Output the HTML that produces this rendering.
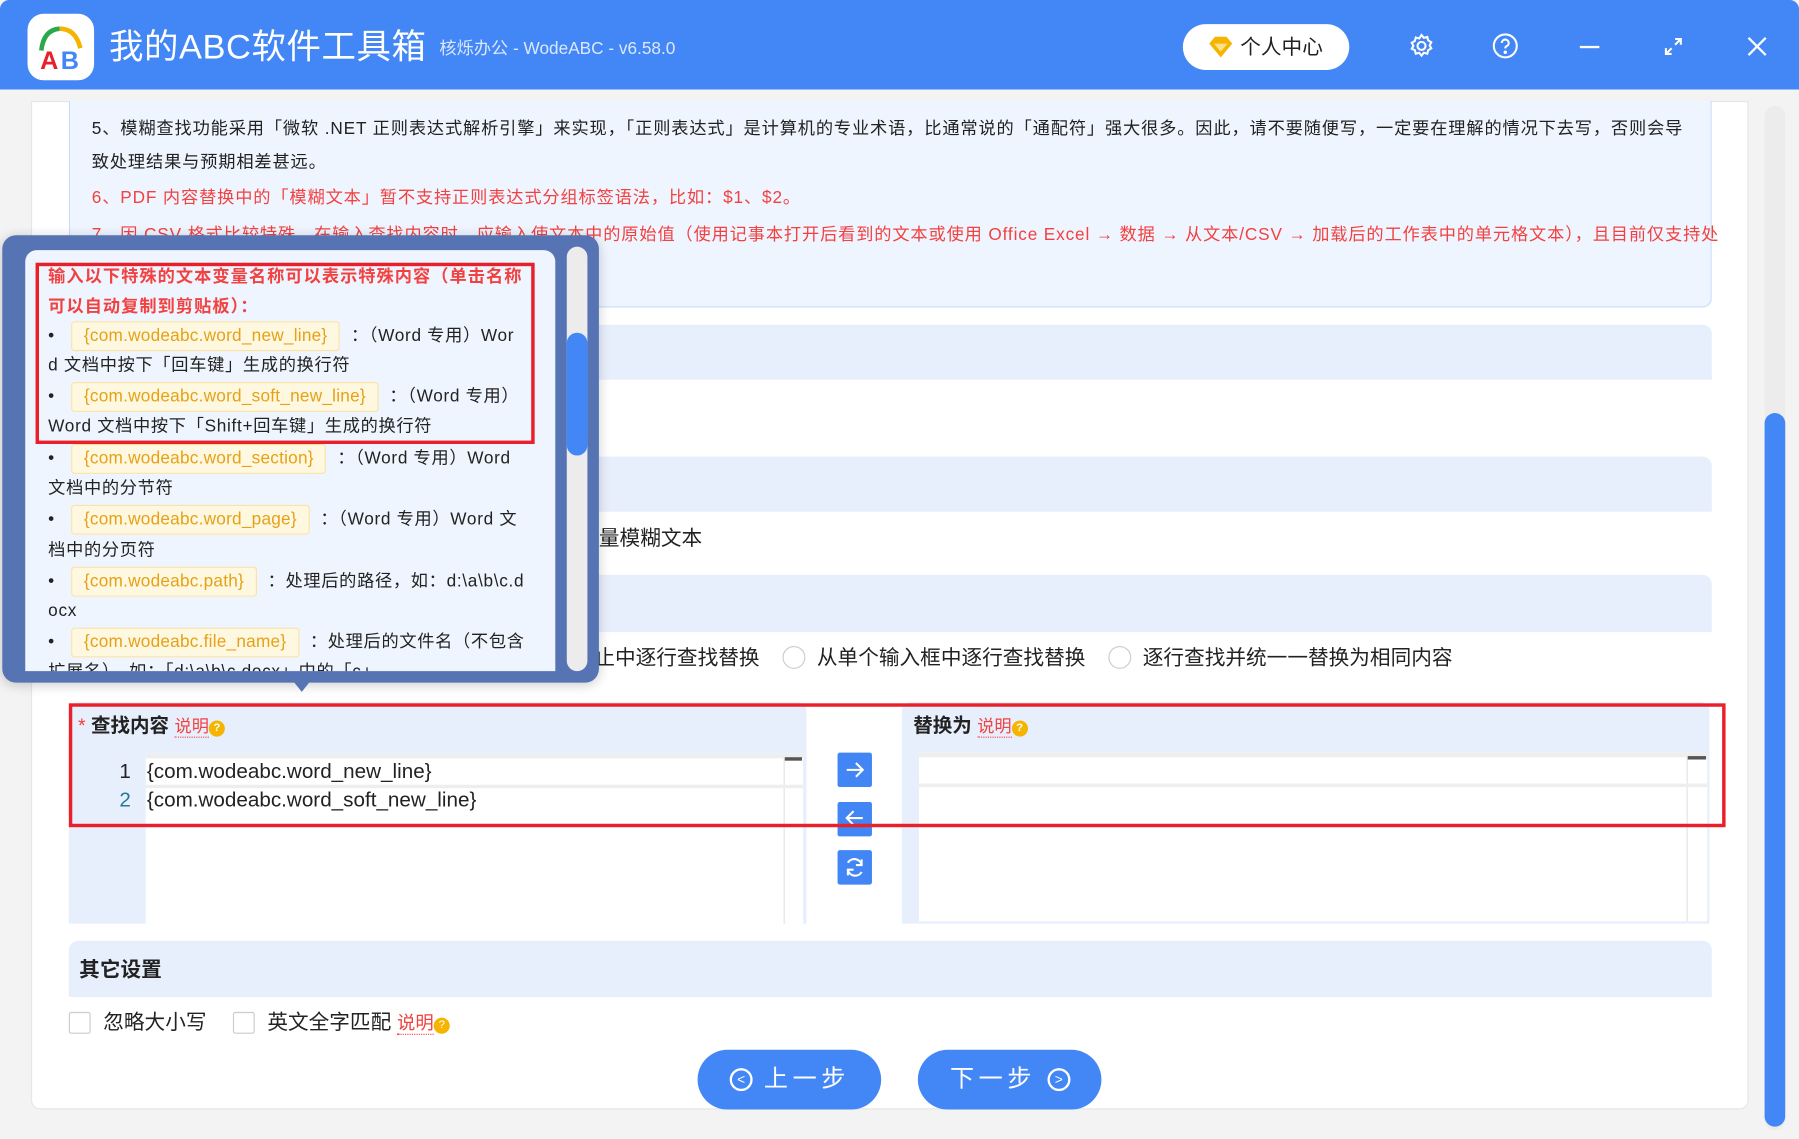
<!DOCTYPE html>
<html><head><meta charset="utf-8">
<style>
*{box-sizing:border-box;margin:0;padding:0}
html,body{width:1799px;height:1139px;overflow:hidden;background:#f3f3f3}
body{font-family:"Liberation Sans","Noto Sans CJK SC",sans-serif;color:#222}
#w{position:absolute;left:0;top:0;width:1568px;height:993px;transform:scale(1.14732);transform-origin:0 0;background:#f3f3f3}
.a{position:absolute}
.t{position:absolute;white-space:nowrap}
.bar{position:absolute;left:60px;width:1432px;background:#e8effc;border-radius:8px 8px 0 0}
.yl{display:inline-block;background:#fff8e0;border:1px solid #fbe3a6;color:#e6a117;padding:0 10px;border-radius:3px;line-height:24px;letter-spacing:0.2px}
.q{display:inline-block;width:14px;height:14px;border-radius:50%;background:#f4b400;color:#fff;font-size:10px;line-height:14px;text-align:center;vertical-align:1px}
.sm{color:#f24141;border-bottom:1px dotted #f24141}
.pl{position:absolute;left:42px;font-size:15px;line-height:26px;white-space:nowrap;color:#222;letter-spacing:0.6px}
.btn{position:absolute;width:30px;height:30px;background:#4285f4;border-radius:2px}
.rad{display:inline-block;width:20px;height:20px;border:1px solid #ccc;border-radius:50%;vertical-align:-4px;margin-right:10px}
.cb{position:absolute;width:19px;height:19px;border:1px solid #ccc;border-radius:2px;background:#fff}
.info{font-size:15px;line-height:22px;letter-spacing:0.75px}
</style></head><body><div id="w">
<div class="a" style="left:0;top:0;width:1568px;height:78px;background:#4287f5;border-radius:8px 8px 0 0"></div>
<div class="a" style="left:24px;top:12px;width:58px;height:58px;background:#fff;border-radius:14px"></div>
<svg class="a" style="left:24px;top:12px" width="58" height="58" viewBox="0 0 58 58">
<path d="M12 32 Q14 14 28 13" stroke="#2aa84a" stroke-width="4" fill="none"/>
<path d="M28 13 Q42 13 46 30" stroke="#f4b400" stroke-width="4" fill="none"/>
<text x="11" y="48" font-family="Liberation Sans" font-weight="bold" font-size="22" fill="#e8202a">A</text>
<text x="29" y="48" font-family="Liberation Sans" font-weight="bold" font-size="22" fill="#4287f5">B</text>
</svg>
<div class="t" style="left:95px;top:22px;font-size:30px;color:#fff;line-height:40px;letter-spacing:0.5px">我的ABC软件工具箱</div>
<div class="t" style="left:383px;top:33px;font-size:15px;color:#dce8ff;line-height:20px">核烁办公 - WodeABC - v6.58.0</div>
<div class="a" style="left:1031px;top:21px;width:145px;height:40px;background:#fff;border-radius:20px"></div>
<svg class="a" style="left:1052px;top:31px" width="24" height="20" viewBox="0 0 24 20"><path d="M2 7 L7 1 H17 L22 7 L12 19Z" fill="#f4b400"/><path d="M6 7 H18 L12 14Z" fill="#fde08a"/></svg>
<div class="t" style="left:1081px;top:30px;font-size:18px;line-height:22px;color:#222">个人中心</div>
<svg class="a" style="left:1227px;top:28px" width="24" height="24" viewBox="0 0 24 24" fill="none" stroke="#fff" stroke-width="1.8"><circle cx="12" cy="12" r="3.5"/><path d="M12 2.5l2 2.5 3-.8.8 3 2.7 1.6-1.4 2.7 1.4 2.7-2.7 1.6-.8 3-3-.8-2 2.5-2-2.5-3 .8-.8-3L3.5 14.5 4.9 12 3.5 9.3 6.2 7.7l.8-3 3 .8z"/></svg>
<svg class="a" style="left:1300px;top:28px" width="24" height="24" viewBox="0 0 24 24" fill="none" stroke="#fff" stroke-width="1.8"><circle cx="12" cy="12" r="10"/><path d="M9 9.5a3 3 0 1 1 4 2.8c-.8.4-1 1-1 2"/><circle cx="12" cy="17.5" r=".6" fill="#fff"/></svg>
<div class="a" style="left:1377px;top:40px;width:17px;height:2px;background:#fff"></div>
<svg class="a" style="left:1450px;top:32px" width="17" height="17" viewBox="0 0 17 17" stroke="#fff" stroke-width="1.8" fill="none"><path d="M10 2h5v5M15 2l-5 5M7 15H2v-5M2 15l5-5"/></svg>
<svg class="a" style="left:1523px;top:32px" width="17" height="17" viewBox="0 0 17 17" stroke="#fff" stroke-width="2"><path d="M1 1l15 15M16 1L1 16"/></svg>

<div class="a" style="left:27px;top:88px;width:1497px;height:879px;background:#fff;border:1px solid #e6e6e6;border-radius:0 0 8px 8px"></div>
<div class="a" style="left:60px;top:88px;width:1432px;height:180px;background:#eef5fe;border:1px solid #c6dcf8;border-top:none;border-radius:0 0 8px 8px"></div>
<div class="t info" style="left:80px;top:102px">5、模糊查找功能采用「微软 .NET 正则表达式解析引擎」来实现，「正则表达式」是计算机的专业术语，比通常说的「通配符」强大很多。因此，请不要随便写，一定要在理解的情况下去写，否则会导</div>
<div class="t info" style="left:80px;top:131px">致处理结果与预期相差甚远。</div>
<div class="t info" style="left:80px;top:162px;color:#f24141">6、PDF 内容替换中的「模糊文本」暂不支持正则表达式分组标签语法，比如：$1、$2。</div>
<div class="t info" style="left:80px;top:194px;color:#f24141">7、因 CSV 格式比较特殊，在输入查找内容时，应输入使文本中的原始值（使用记事本打开后看到的文本或使用 Office Excel → 数据 → 从文本/CSV → 加载后的工作表中的单元格文本），且目前仅支持处</div>

<div class="bar" style="top:283px;height:48px"></div>
<div class="bar" style="top:398px;height:48px"></div>
<div class="t" style="left:522px;top:457px;font-size:18px;line-height:24px">量模糊文本</div>
<div class="bar" style="top:501px;height:50px"></div>
<div class="t" style="left:518px;top:561px;font-size:18px;line-height:24px">止中逐行查找替换 &nbsp;&nbsp;&nbsp;<span class="rad"></span>从单个输入框中逐行查找替换 &nbsp;&nbsp;&nbsp;<span class="rad"></span>逐行查找并统一一替换为相同内容</div>

<div class="a" style="left:60px;top:612px;width:643px;height:193px;background:#e8effc;border-radius:8px 8px 0 0"></div>
<div class="t" style="left:68px;top:622px;font-size:17px;line-height:22px;font-weight:bold"><span style="color:#f24141;font-weight:normal">*</span> 查找内容 <span class="sm" style="font-size:15px;font-weight:normal">说明</span><span class="q">?</span></div>
<div class="a" style="left:127px;top:657px;width:573px;height:148px;background:#fff;border-top:4px solid #eee"></div>
<div class="a" style="left:683px;top:661px;width:17px;height:144px;border-left:1px solid #e3e3e3"></div>
<div class="a" style="left:684px;top:660px;width:15px;height:3px;background:#555"></div>
<div class="a" style="left:127px;top:684px;width:573px;height:3px;background:#eee"></div>
<div class="t" style="left:104px;top:660px;font-size:18px;line-height:24px;color:#222">1</div>
<div class="t" style="left:104px;top:685px;font-size:18px;line-height:24px;color:#237893">2</div>
<div class="t" style="left:128px;top:660px;font-size:18px;line-height:24px">{com.wodeabc.word_new_line}</div>
<div class="t" style="left:128px;top:685px;font-size:18px;line-height:24px">{com.wodeabc.word_soft_new_line}</div>

<div class="btn" style="left:730px;top:656px"></div>
<div class="btn" style="left:730px;top:699px"></div>
<div class="btn" style="left:730px;top:741px"></div>
<svg class="a" style="left:730px;top:656px" width="30" height="120" viewBox="0 0 30 120" stroke="#fff" stroke-width="1.8" fill="none"><path d="M8 15h14M16 9l6 6-6 6"/><path d="M22 57H8M14 51l-6 6 6 6"/>
<path d="M21 98 A6.5 6.5 0 0 0 9 96"/><path d="M9 102 A6.5 6.5 0 0 0 21 104"/><path d="M21 93v5h-5"/><path d="M9 107v-5h5"/></svg>

<div class="a" style="left:786px;top:612px;width:704px;height:193px;background:#e8effc;border-radius:8px 8px 0 0"></div>
<div class="t" style="left:796px;top:622px;font-size:17px;line-height:22px;font-weight:bold">替换为 <span class="sm" style="font-size:15px;font-weight:normal">说明</span><span class="q">?</span></div>
<div class="a" style="left:801px;top:656px;width:687px;height:147px;background:#fff;border-top:4px solid #eee"></div>
<div class="a" style="left:1470px;top:660px;width:17px;height:143px;border-left:1px solid #e3e3e3"></div>
<div class="a" style="left:1471px;top:659px;width:16px;height:3px;background:#555"></div>
<div class="a" style="left:801px;top:683px;width:687px;height:3px;background:#eee"></div>

<div class="a" style="left:60px;top:613px;width:1444px;height:108px;border:3px solid #e8202a"></div>

<div class="bar" style="top:820px;height:49px"></div>
<div class="t" style="left:69px;top:833px;font-size:18px;font-weight:bold;line-height:24px">其它设置</div>
<div class="cb" style="left:60px;top:882px"></div>
<div class="t" style="left:90px;top:879px;font-size:18px;line-height:24px">忽略大小写</div>
<div class="cb" style="left:203px;top:882px"></div>
<div class="t" style="left:233px;top:879px;font-size:18px;line-height:24px">英文全字匹配 <span class="sm" style="font-size:16px">说明</span><span class="q">?</span></div>

<div class="a" style="left:608px;top:915px;width:160px;height:52px;background:#4287f5;border-radius:26px"></div>
<div class="t" style="left:636px;top:928px;font-size:21px;line-height:26px;color:#fff;letter-spacing:4px"><span style="display:inline-block;width:20px;height:20px;border:2px solid #fff;border-radius:50%;font-size:12px;line-height:16px;text-align:center;vertical-align:2px;letter-spacing:0">&lt;</span> 上一步</div>
<div class="a" style="left:800px;top:915px;width:160px;height:52px;background:#4287f5;border-radius:26px"></div>
<div class="t" style="left:828px;top:928px;font-size:21px;line-height:26px;color:#fff;letter-spacing:4px">下一步 <span style="display:inline-block;width:20px;height:20px;border:2px solid #fff;border-radius:50%;font-size:12px;line-height:16px;text-align:center;vertical-align:2px;letter-spacing:0">&gt;</span></div>

<div class="a" style="left:1538px;top:92px;width:18px;height:893px;background:#ececec;border-radius:9px"></div>
<div class="a" style="left:1538px;top:360px;width:18px;height:622px;background:#4287f5;border-radius:9px"></div>

<div class="a" style="left:2px;top:205px;width:520px;height:390px;background:#5673b3;border-radius:12px;box-shadow:0 2px 10px rgba(0,0,0,.2)"></div>
<div class="a" style="left:255px;top:593px;width:0;height:0;border-left:8px solid transparent;border-right:8px solid transparent;border-top:10px solid #5673b3"></div>
<div class="a" style="left:22px;top:218px;width:462px;height:367px;background:#eef5fe;border-radius:10px 10px 0 0;overflow:hidden">
<div style="position:absolute;left:-22px;top:-218px;width:520px;height:900px">
<div class="pl" style="top:229px;font-weight:bold;color:#f24141;letter-spacing:0.9px">输入以下特殊的文本变量名称可以表示特殊内容（单击名称</div>
<div class="pl" style="top:255px;font-weight:bold;color:#f24141;letter-spacing:0.9px">可以自动复制到剪贴板）：</div>
<div class="pl" style="top:280px">•&nbsp;&nbsp; <span class="yl">{com.wodeabc.word_new_line}</span> &nbsp;：（Word 专用）Wor</div>
<div class="pl" style="top:306px">d 文档中按下「回车键」生成的换行符</div>
<div class="pl" style="top:333px">•&nbsp;&nbsp; <span class="yl">{com.wodeabc.word_soft_new_line}</span> &nbsp;：（Word 专用）</div>
<div class="pl" style="top:359px">Word 文档中按下「Shift+回车键」生成的换行符</div>
<div class="pl" style="top:387px">•&nbsp;&nbsp; <span class="yl">{com.wodeabc.word_section}</span> &nbsp;：（Word 专用）Word</div>
<div class="pl" style="top:413px">文档中的分节符</div>
<div class="pl" style="top:440px">•&nbsp;&nbsp; <span class="yl">{com.wodeabc.word_page}</span> &nbsp;：（Word 专用）Word 文</div>
<div class="pl" style="top:467px">档中的分页符</div>
<div class="pl" style="top:494px">•&nbsp;&nbsp; <span class="yl">{com.wodeabc.path}</span> &nbsp;：处理后的路径，如：d:\a\b\c.d</div>
<div class="pl" style="top:520px">ocx</div>
<div class="pl" style="top:547px">•&nbsp;&nbsp; <span class="yl">{com.wodeabc.file_name}</span> &nbsp;：处理后的文件名（不包含</div>
<div class="pl" style="top:573px">扩展名），如：「d:\a\b\c.docx」中的「c」</div>
<div class="a" style="left:31px;top:229px;width:435px;height:158px;border:3px solid #e8202a"></div>
</div></div>
<div class="a" style="left:494px;top:215px;width:18px;height:370px;background:#ececec;border-radius:9px"></div>
<div class="a" style="left:494px;top:290px;width:18px;height:107px;background:#4287f5;border-radius:9px"></div>
</div></body></html>
